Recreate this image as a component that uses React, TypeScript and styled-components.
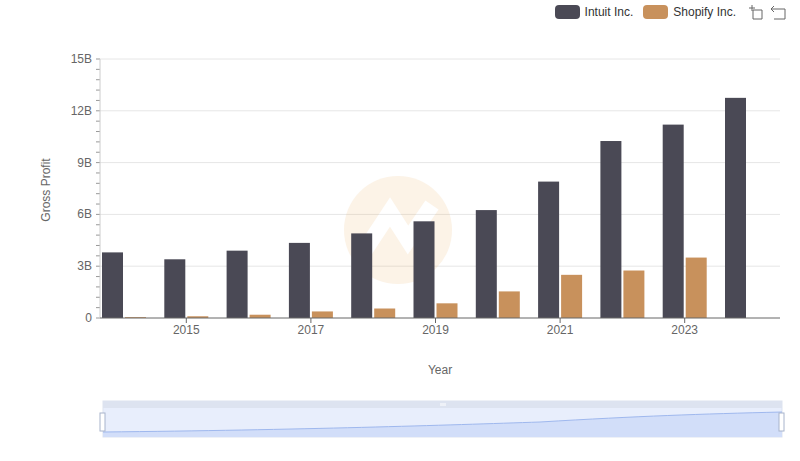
import styled, { createGlobalStyle } from "styled-components";

const GlobalStyle = createGlobalStyle`
  body { margin: 0; background: #fff; font-family: "Liberation Sans", Arial, sans-serif; }
`;

const INTUIT = [3.8, 3.4, 3.9, 4.35, 4.9, 5.6, 6.25, 7.9, 10.25, 11.2, 12.75];
const SHOPIFY = [0.05, 0.1, 0.19, 0.38, 0.55, 0.85, 1.54, 2.5, 2.75, 3.5, 0];

const X0 = 100;
const X1 = 780;
const Y0 = 318;
const PX_PER_B = (318 - 59) / 15;
const SLOT = 62.3;

const Page = styled.div`
  position: relative;
  width: 800px;
  height: 461px;
  overflow: hidden;
`;

const Legend = styled.div`
  position: absolute;
  top: 4px;
  right: 14px;
  display: flex;
  align-items: center;
  gap: 10px;
  font-size: 12px;
  color: #333;
`;

const LegendItem = styled.div`
  display: flex;
  align-items: center;
  gap: 5px;
`;

const Swatch = styled.span<{ $color: string }>`
  width: 25px;
  height: 14px;
  border-radius: 4px;
  background: ${({ $color }) => $color};
`;

const Tools = styled.div`
  display: flex;
  gap: 6px;
  margin-left: 2px;
`;

const Chart = styled.svg`
  display: block;
`;

export default function App() {
  const yTicks = [0, 3, 6, 9, 12, 15];
  return (
    <Page>
      <GlobalStyle />
      <Chart width={800} height={461}>
        {yTicks.map((t) => {
          const y = Y0 - t * PX_PER_B;
          return (
            <g key={t}>
              {t > 0 && <line x1={X0} x2={X1} y1={y} y2={y} stroke="#e6e6e6" />}
              <text x={92} y={y + 4} fontSize={12} fill="#666" textAnchor="end">
                {t === 0 ? "0" : `${t}B`}
              </text>
            </g>
          );
        })}
        {Array.from({ length: 26 }, (_, i) => {
          const y = Y0 - (i * 0.6) * PX_PER_B;
          return <line key={i} x1={96} x2={100} y1={y} y2={y} stroke="#999" />;
        })}
        <line x1={X0} x2={X0} y1={59} y2={Y0} stroke="#ccc" />
        <text x={50} y={190} fontSize={12} fill="#666" textAnchor="middle" transform="rotate(-90 50 190)">
          Gross Profit
        </text>
        <g opacity={0.12}>
          <circle cx={398} cy={230} r={54} fill="#e8a040" />
          <path d="M365 250 L390 212 L408 240 L432 205" stroke="#fff" strokeWidth={16} fill="none" />
        </g>
        {INTUIT.map((v, i) => {
          const x = X0 + i * SLOT;
          return (
            <g key={i}>
              <rect x={x + 2} y={Y0 - v * PX_PER_B} width={21} height={v * PX_PER_B} fill="#4a4955" />
              {SHOPIFY[i] > 0 && (
                <rect x={x + 25} y={Y0 - SHOPIFY[i] * PX_PER_B} width={21} height={SHOPIFY[i] * PX_PER_B} fill="#c8915c" />
              )}
            </g>
          );
        })}
        <line x1={X0} x2={X1} y1={Y0} y2={Y0} stroke="#666" />
        {[2015, 2017, 2019, 2021, 2023].map((yr) => {
          const x = X0 + (yr - 2014) * SLOT + 24;
          return (
            <g key={yr}>
              <line x1={x} x2={x} y1={Y0} y2={Y0 + 5} stroke="#666" />
              <text x={x} y={Y0 + 16} fontSize={12} fill="#666" textAnchor="middle">{yr}</text>
            </g>
          );
        })}
        <text x={440} y={374} fontSize={12} fill="#666" textAnchor="middle">Year</text>

        <rect x={103} y={401} width={679} height={36} fill="#e8eefc" stroke="#dde3f0" />
        <rect x={103} y={401} width={679} height={7} fill="#dde3f0" />
        <path d="M103 432 C300 430 450 425 540 422 C640 416 700 414 782 412 L782 437 L103 437 Z" fill="#d2def9" />
        <path d="M103 432 C300 430 450 425 540 422 C640 416 700 414 782 412" stroke="#9fb8ee" fill="none" />
        <line x1={441} x2={441} y1={403} y2={406} stroke="#fff" />
        <line x1={443} x2={443} y1={403} y2={406} stroke="#fff" />
        <line x1={445} x2={445} y1={403} y2={406} stroke="#fff" />
        <rect x={100} y={413} width={5} height={18} fill="#fff" stroke="#a8b4cc" />
        <rect x={779} y={413} width={5} height={18} fill="#fff" stroke="#a8b4cc" />
      </Chart>
      <Legend>
        <LegendItem><Swatch $color="#4a4955" />Intuit Inc.</LegendItem>
        <LegendItem><Swatch $color="#c8915c" />Shopify Inc.</LegendItem>
        <Tools>
          <svg width={16} height={16} viewBox="0 0 16 16" fill="none" stroke="#666">
            <path d="M1 4h6M4 1v6M5 6h9v9H5z" />
          </svg>
          <svg width={16} height={16} viewBox="0 0 16 16" fill="none" stroke="#666">
            <path d="M4 2L1 5l3 3M1 5h14v10H4" />
          </svg>
        </Tools>
      </Legend>
    </Page>
  );
}
